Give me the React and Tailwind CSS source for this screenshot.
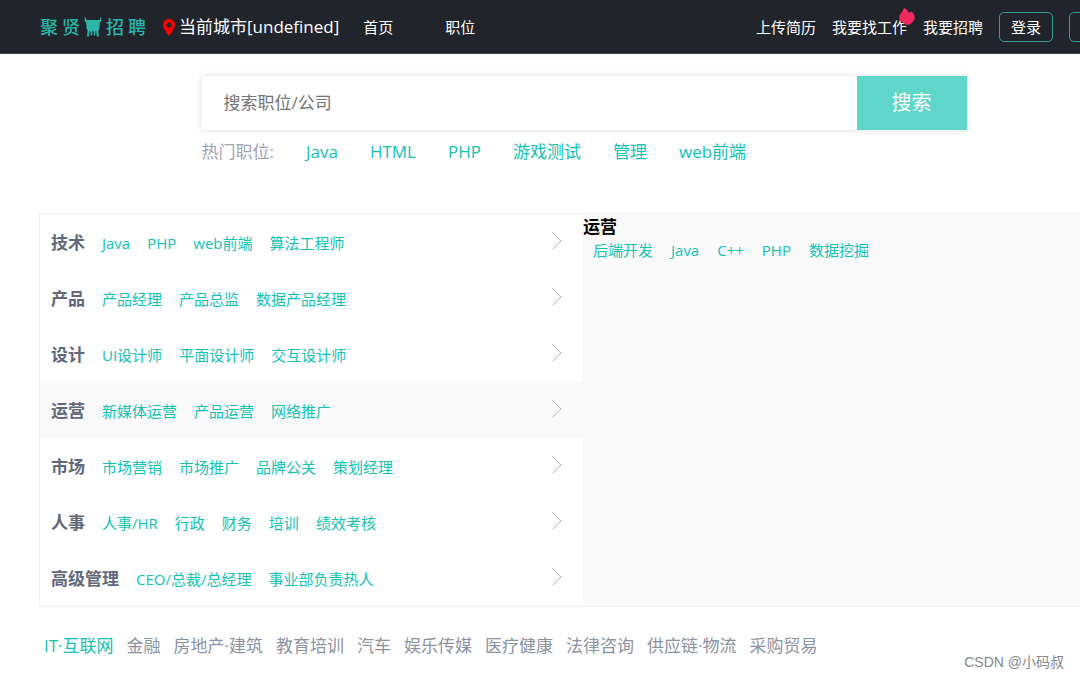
import React from "react";

const hotJobs = ["Java", "HTML", "PHP", "游戏测试", "管理", "web前端"];

const categories = [
  { name: "技术", jobs: ["Java", "PHP", "web前端", "算法工程师"] },
  { name: "产品", jobs: ["产品经理", "产品总监", "数据产品经理"] },
  { name: "设计", jobs: ["UI设计师", "平面设计师", "交互设计师"] },
  { name: "运营", jobs: ["新媒体运营", "产品运营", "网络推广"], active: true },
  { name: "市场", jobs: ["市场营销", "市场推广", "品牌公关", "策划经理"] },
  { name: "人事", jobs: ["人事/HR", "行政", "财务", "培训", "绩效考核"] },
  { name: "高级管理", jobs: ["CEO/总裁/总经理", "事业部负责热人"] },
];

const detailJobs = ["后端开发", "Java", "C++", "PHP", "数据挖掘"];

const industries = [
  "IT·互联网",
  "金融",
  "房地产·建筑",
  "教育培训",
  "汽车",
  "娱乐传媒",
  "医疗健康",
  "法律咨询",
  "供应链·物流",
  "采购贸易",
];

function Logo() {
  return (
    <a href="#" className="flex items-center gap-1 text-[18px] leading-5 font-medium text-[#2cb5a9]">
      <span>聚</span>
      <span>贤</span>
      <svg viewBox="0 0 18 20" className="h-5 w-[18px]" fill="currentColor" aria-hidden="true">
        <path d="M0.6 0.4 L1.8 0.4 L2.2 3 L15.8 3 L16.2 0.4 L17.4 0.4 L17.2 4.4 L15.8 5.4 L15.4 12 L14.4 13.4 L14.8 19.4 L12.8 19.4 L12.2 14.2 L11.4 14.2 L11.2 18.4 L9.8 18.4 L9.6 14.2 L8.4 14.2 L8.2 18.4 L6.8 18.4 L6.6 14.2 L5.6 14.2 L5 19.4 L3 19.4 L3.6 13.2 L2.6 11.6 L2.2 5.4 L0.8 4.4 Z" />
      </svg>
      <span>招</span>
      <span>聘</span>
    </a>
  );
}

function Pin() {
  return (
    <svg viewBox="0 0 12 17" className="h-[17px] w-3" aria-hidden="true">
      <path
        fill="#ff0000"
        fillRule="evenodd"
        d="M6 0 C2.6 0 0 2.6 0 6 C0 9.6 6 17 6 17 C6 17 12 9.6 12 6 C12 2.6 9.4 0 6 0 Z M6 3.6 A2.5 2.5 0 1 1 6 8.6 A2.5 2.5 0 1 1 6 3.6 Z"
      />
    </svg>
  );
}

function Flame() {
  return (
    <svg viewBox="0 0 16 17" className="absolute -top-2 -right-2 h-[17px] w-4" aria-hidden="true">
      <path
        fill="#f02a5e"
        d="M5 0 C7.4 0.8 9.4 2.8 10 5.4 C10.8 5 11.6 4.2 11.9 3.2 C14.4 4.6 15.9 7.2 15.7 10 C15.6 11.4 15 12.6 14 13.4 C13 15.4 11 16.8 8.4 16.8 C6.4 16.8 4.8 16 3.8 14.8 C1.6 14 0.2 12 0.2 9.4 C0.2 6.6 2.2 5.4 3.2 3.8 C3.9 2.7 4.6 1.5 5 0 Z"
      />
    </svg>
  );
}

function Chevron() {
  return (
    <svg viewBox="0 0 10 18" className="mb-1 h-[18px] w-2.5" fill="none" stroke="#b8b8b8" aria-hidden="true">
      <path d="M0.8 0.8 L9 9 L0.8 17.2" />
    </svg>
  );
}

function Header() {
  const button =
    "h-[30px] rounded-[5px] border border-[#3c9a90] px-[11px] text-white";
  return (
    <header className="flex h-[54px] items-center border-b border-[#45474d] bg-[#21242b] pt-px pr-[45px] pl-10 text-[15px] text-white">
      <Logo />
      <a href="#" className="ml-[17px] flex items-center gap-1 text-[17px]">
        <Pin />
        当前城市[undefined]
      </a>
      <nav className="ml-6 flex gap-[52px]">
        <a href="#">首页</a>
        <a href="#">职位</a>
      </nav>
      <div className="ml-auto flex items-center gap-4">
        <a href="#">上传简历</a>
        <a href="#" className="relative">
          我要找工作
          <Flame />
        </a>
        <a href="#">我要招聘</a>
        <button type="button" className={button}>登录</button>
        <button type="button" className={button}>注册</button>
      </div>
    </header>
  );
}

function Search() {
  return (
    <section className="mx-auto w-[765px]">
      <form className="flex h-[54px] shadow-[0_0_6px_rgba(0,0,0,0.14)]" onSubmit={(e) => e.preventDefault()}>
        <input
          type="text"
          aria-label="搜索职位/公司"
          placeholder="搜索职位/公司"
          className="min-w-0 flex-1 bg-white px-[22px] text-[17px] outline-none placeholder:text-[#757575]"
        />
        <button type="submit" className="w-[110px] bg-[#5fd6ca] text-[20px] text-white">
          搜索
        </button>
      </form>
      <div className="mt-2.5 flex gap-8 text-[17px] leading-6 text-[#12c2b4]">
        <span className="text-[#9fa3b0]">热门职位:</span>
        {hotJobs.map((job) => (
          <a href="#" key={job}>{job}</a>
        ))}
      </div>
    </section>
  );
}

function Categories() {
  return (
    <section className="mt-[49px] flex border border-[#f1f1f1] bg-[#fafafa]">
      <ul className="w-[543px]">
        {categories.map((c) => (
          <li
            key={c.name}
            className={`flex h-14 items-center justify-between pt-0.5 pr-[21px] pl-[11px] ${c.active ? "bg-[#fafafa]" : "bg-white"}`}
          >
            <div className="flex items-center gap-[17px] text-[15px] text-[#12c2b4]">
              <h2 className="text-[17px] font-bold text-[#61687c]">{c.name}</h2>
              {c.jobs.map((job) => (
                <a href="#" key={job}>{job}</a>
              ))}
            </div>
            <Chevron />
          </li>
        ))}
      </ul>
      <div className="flex-1">
        <h2 className="text-[17px] leading-[26px] font-bold text-black">运营</h2>
        <div className="flex gap-[18px] pl-2.5 text-[15px] leading-5 text-[#12c2b4]">
          {detailJobs.map((job) => (
            <a href="#" key={job}>{job}</a>
          ))}
        </div>
      </div>
    </section>
  );
}

export default function App() {
  return (
    <div className="relative min-h-screen overflow-x-clip bg-white font-['Open_Sans','Noto_Sans_CJK_SC',sans-serif] whitespace-nowrap">
      <div className="min-w-[1168px]">
        <Header />
        <main className="px-[39px] pt-[22px]">
          <Search />
          <Categories />
          <nav className="mt-[27px] flex gap-[13px] pl-[5px] text-[17px] leading-6 text-[#8d92a1]">
            {industries.map((name, i) => (
              <a href="#" key={name} className={i === 0 ? "text-[#12c2b4]" : ""}>{name}</a>
            ))}
          </nav>
        </main>
      </div>
      <p className="absolute right-4 bottom-1.5 font-['Liberation_Sans','Noto_Sans_CJK_SC',sans-serif] text-[14px] leading-5 text-[#85878b]">
        CSDN @小码叔
      </p>
    </div>
  );
}
